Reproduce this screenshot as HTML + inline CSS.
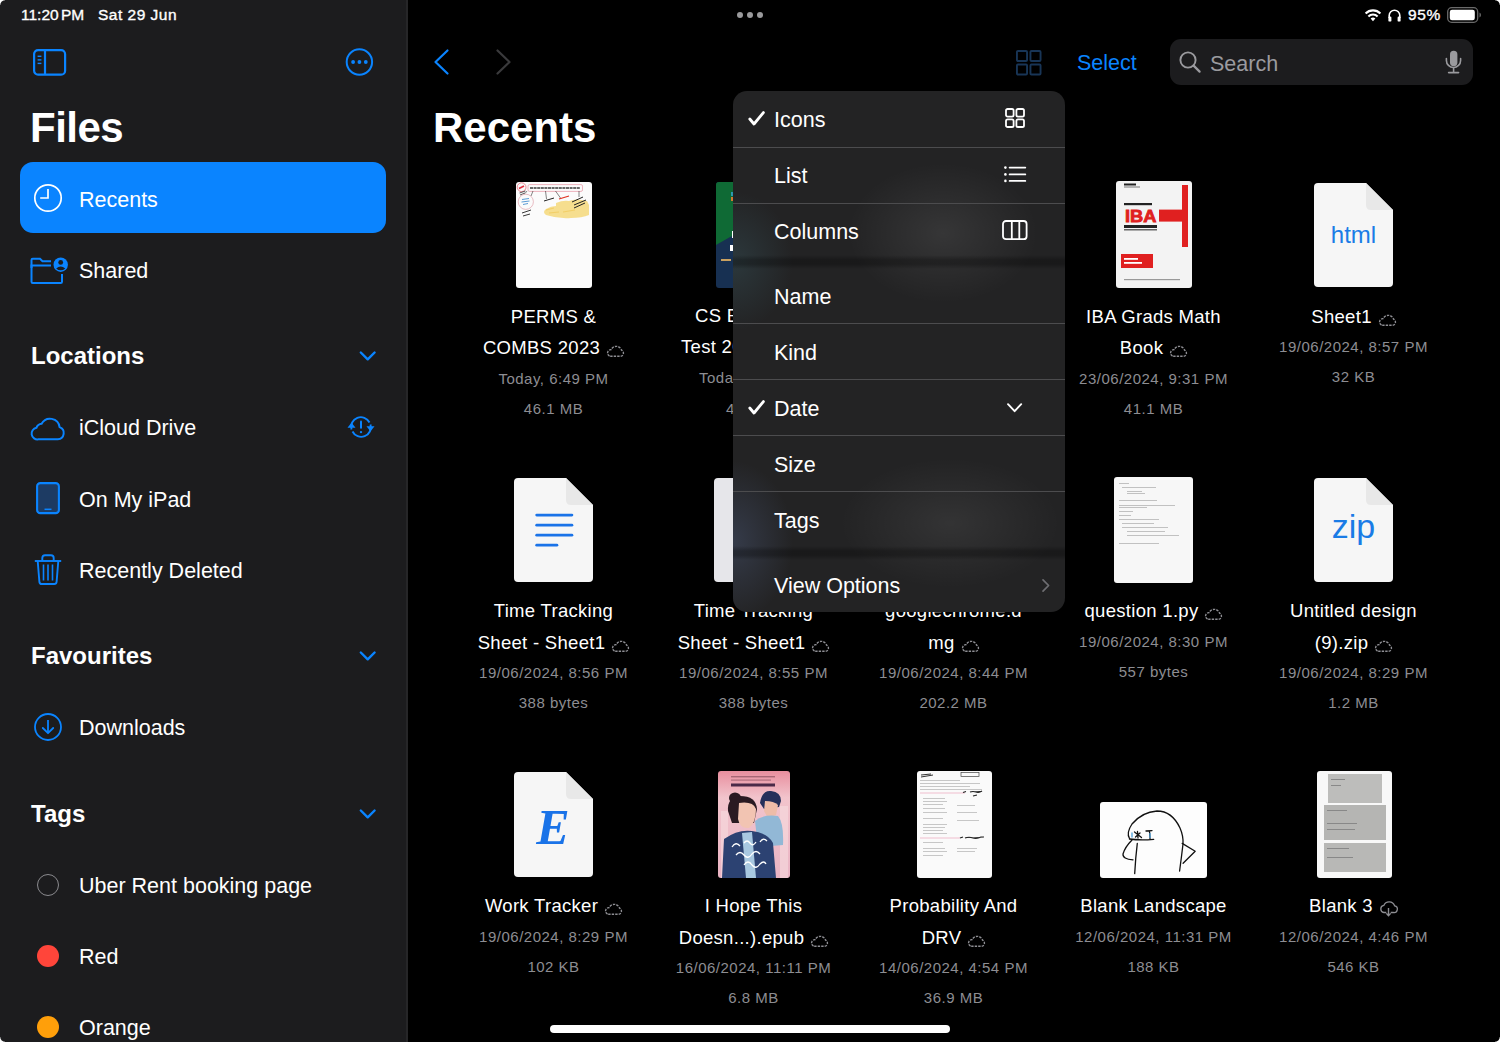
<!DOCTYPE html>
<html><head><meta charset="utf-8">
<style>
*{margin:0;padding:0;box-sizing:border-box}
html,body{width:1500px;height:1042px;overflow:hidden;background:#000;font-family:"Liberation Sans",sans-serif;color:#fff}
.a{position:absolute}
.t{position:absolute;white-space:nowrap;line-height:1}
.st{font-size:15.5px;color:#fff;-webkit-text-stroke:0.35px #fff}
.big{font-size:42px;font-weight:bold}
.sec{font-size:24px;font-weight:bold}
.item{font-size:21.5px}
.nm{position:absolute;width:240px;text-align:center;font-size:18.5px;line-height:31.5px;letter-spacing:0.3px;white-space:nowrap}
.mt{position:absolute;width:240px;text-align:center;font-size:15px;line-height:30px;letter-spacing:0.5px;color:#8d8d92;white-space:nowrap}
.cl{display:inline-block;width:18px;height:13px;margin-left:6px;vertical-align:-3px}
svg{position:absolute;overflow:visible}
.mi{position:absolute;left:774px;font-size:21.5px;line-height:1;white-space:nowrap}
</style></head><body>
<div class="a" style="left:0;top:0;width:406px;height:1042px;background:#1c1c1e"></div>
<div class="a" style="left:406px;top:0;width:2px;height:1042px;background:#262628"></div>

<div class="t st" style="left:21px;top:7px;word-spacing:-2px">11:20 PM</div>
<div class="t st" style="left:98px;top:7px;letter-spacing:0.5px">Sat 29 Jun</div>
<div class="t st" style="left:1408px;top:7px;letter-spacing:0.6px">95%</div>
<svg style="left:1364px;top:8px" width="18" height="14" viewBox="0 0 18 14">
<path d="M9 13.2 L6.6 10.6 A3.4 3.4 0 0 1 11.4 10.6 Z" fill="#fff"/>
<path d="M4.4 8.4 A6.5 6.5 0 0 1 13.6 8.4" stroke="#fff" stroke-width="2.1" fill="none"/>
<path d="M1.6 5.4 A10.5 10.5 0 0 1 16.4 5.4" stroke="#fff" stroke-width="2.1" fill="none"/>
</svg>
<svg style="left:1388px;top:9px" width="13" height="13" viewBox="0 0 13 13">
<path d="M1.2 9 V6.5 A5.3 5.3 0 0 1 11.8 6.5 V9" stroke="#fff" stroke-width="1.6" fill="none"/>
<rect x="0.4" y="7.6" width="3" height="5" rx="1.2" fill="#fff"/>
<rect x="9.6" y="7.6" width="3" height="5" rx="1.2" fill="#fff"/>
</svg>
<svg style="left:1447px;top:7px" width="36" height="16" viewBox="0 0 36 16">
<rect x="0.7" y="0.7" width="30" height="14.6" rx="4" fill="none" stroke="#6a6a6a" stroke-width="1.3"/>
<rect x="2.8" y="2.8" width="25" height="10.4" rx="2.2" fill="#fff"/>
<path d="M32.5 5.5 A2.8 2.8 0 0 1 32.5 10.5 Z" fill="#6a6a6a"/>
</svg>
<div class="a" style="left:737px;top:12px;width:6px;height:6px;border-radius:3px;background:#9a9a9c"></div>
<div class="a" style="left:747px;top:12px;width:6px;height:6px;border-radius:3px;background:#9a9a9c"></div>
<div class="a" style="left:757px;top:12px;width:6px;height:6px;border-radius:3px;background:#9a9a9c"></div>
<svg style="left:33px;top:49px" width="34" height="27" viewBox="0 0 34 27">
<rect x="1.1" y="1.1" width="31" height="24.6" rx="4" fill="none" stroke="#0a84ff" stroke-width="2.2"/>
<line x1="12" y1="1" x2="12" y2="26" stroke="#0a84ff" stroke-width="2.2"/>
<line x1="4.6" y1="7.3" x2="8.4" y2="7.3" stroke="#0a84ff" stroke-width="1.4"/>
<line x1="4.6" y1="10.9" x2="8.4" y2="10.9" stroke="#0a84ff" stroke-width="1.4"/>
<line x1="4.6" y1="14.4" x2="8.4" y2="14.4" stroke="#0a84ff" stroke-width="1.4"/>
</svg>
<svg style="left:345px;top:48px" width="28" height="28" viewBox="0 0 28 28">
<circle cx="14.4" cy="14" r="12.7" fill="none" stroke="#0a84ff" stroke-width="2"/>
<circle cx="8.1" cy="14" r="1.9" fill="#0a84ff"/><circle cx="14.4" cy="14" r="1.9" fill="#0a84ff"/><circle cx="20.8" cy="14" r="1.9" fill="#0a84ff"/>
</svg>
<div class="t big" style="left:30px;top:107px;letter-spacing:-0.5px">Files</div>
<div class="a" style="left:20px;top:162px;width:366px;height:71px;background:#0a84ff;border-radius:13px"></div>
<svg style="left:34px;top:184px" width="28" height="28" viewBox="0 0 28 28">
<circle cx="14" cy="14" r="13.2" fill="none" stroke="#fff" stroke-width="1.7"/>
<path d="M14 5 V14 H6.2" fill="none" stroke="#fff" stroke-width="1.7"/>
</svg>
<div class="t item" style="left:79px;top:190px">Recents</div>
<svg style="left:30px;top:256px" width="38" height="29" viewBox="0 0 38 29">
<path d="M1.5 12 V4 Q1.5 2.8 2.7 2.8 H10 L12.5 5.3 H21" fill="none" stroke="#0a84ff" stroke-width="2"/>
<path d="M21 9.5 H1.5 V25.8 Q1.5 27 2.7 27 H30.8 Q32 27 32 25.8 V18" fill="none" stroke="#0a84ff" stroke-width="2"/>
<circle cx="30.7" cy="8.7" r="7.2" fill="#0a84ff"/>
<circle cx="30.7" cy="6.4" r="2.4" fill="#1c1c1e"/>
<path d="M26.2 12.4 Q30.7 8.6 35.2 12.4 Q33.2 14.3 30.7 14.3 Q28.2 14.3 26.2 12.4Z" fill="#1c1c1e"/>
</svg>
<div class="t item" style="left:79px;top:261px">Shared</div>
<div class="t sec" style="left:31px;top:344px">Locations</div>
<svg style="left:359px;top:351px" width="18" height="10" viewBox="0 0 18 10">
<path d="M1.8 1.5 L8.7 8.3 L15.6 1.5" fill="none" stroke="#0a84ff" stroke-width="2.4" stroke-linecap="round" stroke-linejoin="round"/></svg>
<svg style="left:30px;top:414px" width="36" height="27" viewBox="0 0 36 27">
<path d="M8.5 25.3 H27.8 A6.3 6.3 0 0 0 29.6 13.1 A9.6 9.6 0 0 0 11.6 9.8 A6.2 6.2 0 0 0 6.4 13.8 A5.8 5.8 0 0 0 8.5 25.3 Z" fill="none" stroke="#0a84ff" stroke-width="2"/>
</svg>
<div class="t item" style="left:79px;top:418px">iCloud Drive</div>
<svg style="left:347px;top:414px" width="28" height="26" viewBox="0 0 28 26">
<path d="M4.5 15.5 A9.7 9.7 0 0 1 22.5 8.5" fill="none" stroke="#0a84ff" stroke-width="1.9"/>
<path d="M23.5 10.5 A9.7 9.7 0 0 1 5.5 17.5" fill="none" stroke="#0a84ff" stroke-width="1.9"/>
<path d="M0.5 13.8 L4.5 8.6 L8.5 13.8 Z" fill="#0a84ff"/>
<path d="M19.5 12.2 L23.5 17.4 L27.5 12.2 Z" fill="#0a84ff"/>
<rect x="13" y="6.5" width="2" height="8.2" rx="1" fill="#0a84ff"/>
<circle cx="14" cy="18.1" r="1.2" fill="#0a84ff"/>
</svg>
<svg style="left:36px;top:482px" width="24" height="33" viewBox="0 0 24 33">
<rect x="1.1" y="1.1" width="21.8" height="30" rx="3.2" fill="#1d3b63" stroke="#0a84ff" stroke-width="2.1"/>
<line x1="8.5" y1="27.3" x2="15.5" y2="27.3" stroke="#0a84ff" stroke-width="1.5"/>
</svg>
<div class="t item" style="left:79px;top:490px">On My iPad</div>
<svg style="left:34px;top:554px" width="28" height="32" viewBox="0 0 28 32">
<path d="M8.3 6.8 V4 Q8.3 1.2 11 1.2 H17 Q19.7 1.2 19.7 4 V6.8" fill="none" stroke="#0a84ff" stroke-width="1.9"/>
<line x1="0.8" y1="7" x2="27.2" y2="7" stroke="#0a84ff" stroke-width="1.9"/>
<path d="M3.7 7 L5.4 27.8 Q5.6 30 7.8 30 H20.2 Q22.4 30 22.6 27.8 L24.3 7" fill="none" stroke="#0a84ff" stroke-width="1.9"/>
<line x1="9.5" y1="10.5" x2="9.5" y2="26.5" stroke="#0a84ff" stroke-width="1.6"/>
<line x1="14" y1="10.5" x2="14" y2="26.5" stroke="#0a84ff" stroke-width="1.6"/>
<line x1="18.5" y1="10.5" x2="18.5" y2="26.5" stroke="#0a84ff" stroke-width="1.6"/>
</svg>
<div class="t item" style="left:79px;top:561px">Recently Deleted</div>
<div class="t sec" style="left:31px;top:644px">Favourites</div>
<svg style="left:359px;top:651px" width="18" height="10" viewBox="0 0 18 10">
<path d="M1.8 1.5 L8.7 8.3 L15.6 1.5" fill="none" stroke="#0a84ff" stroke-width="2.4" stroke-linecap="round" stroke-linejoin="round"/></svg>
<svg style="left:34px;top:713px" width="28" height="28" viewBox="0 0 28 28">
<circle cx="14" cy="14" r="13" fill="none" stroke="#0a84ff" stroke-width="1.8"/>
<path d="M14 7 V20" stroke="#0a84ff" stroke-width="1.8" fill="none"/>
<path d="M8.8 15 L14 20.2 L19.2 15" stroke="#0a84ff" stroke-width="1.8" fill="none" stroke-linejoin="round" stroke-linecap="round"/>
</svg>
<div class="t item" style="left:79px;top:718px">Downloads</div>
<div class="t sec" style="left:31px;top:802px">Tags</div>
<svg style="left:359px;top:809px" width="18" height="10" viewBox="0 0 18 10">
<path d="M1.8 1.5 L8.7 8.3 L15.6 1.5" fill="none" stroke="#0a84ff" stroke-width="2.4" stroke-linecap="round" stroke-linejoin="round"/></svg>
<div class="a" style="left:37px;top:874px;width:22px;height:22px;border-radius:11px;border:1.6px solid #8a8a8e"></div>
<div class="t item" style="left:79px;top:876px">Uber Rent booking page</div>
<div class="a" style="left:37px;top:945px;width:22px;height:22px;border-radius:11px;background:#ff453a"></div>
<div class="t item" style="left:79px;top:947px">Red</div>
<div class="a" style="left:37px;top:1016px;width:22px;height:22px;border-radius:11px;background:#ff9f0a"></div>
<div class="t item" style="left:79px;top:1018px">Orange</div>
<svg style="left:433px;top:49px" width="17" height="26" viewBox="0 0 17 26">
<path d="M14.5 1.5 L2.5 13 L14.5 24.5" fill="none" stroke="#0a84ff" stroke-width="2.2" stroke-linecap="round" stroke-linejoin="round"/></svg>
<svg style="left:495px;top:49px" width="17" height="26" viewBox="0 0 17 26">
<path d="M2.5 1.5 L14.5 13 L2.5 24.5" fill="none" stroke="#3a3a3c" stroke-width="2.2" stroke-linecap="round" stroke-linejoin="round"/></svg>
<svg style="left:1016px;top:50px" width="25.5" height="25.5" viewBox="0 0 25.5 25.5"><rect x="0.95" y="0.95" width="10.1" height="10.1" rx="1" fill="none" stroke="#183556" stroke-width="1.9"/><rect x="0.95" y="14.45" width="10.1" height="10.1" rx="1" fill="none" stroke="#183556" stroke-width="1.9"/><rect x="14.45" y="0.95" width="10.1" height="10.1" rx="1" fill="none" stroke="#183556" stroke-width="1.9"/><rect x="14.45" y="14.45" width="10.1" height="10.1" rx="1" fill="none" stroke="#183556" stroke-width="1.9"/></svg>
<div class="t item" style="left:1077px;top:53px;color:#0a84ff">Select</div>
<div class="a" style="left:1170px;top:39px;width:303px;height:46px;background:#1c1c1e;border-radius:11px"></div>
<svg style="left:1178px;top:50px" width="24" height="24" viewBox="0 0 24 24">
<circle cx="10" cy="10" r="7.6" fill="none" stroke="#9a9a9e" stroke-width="1.9"/>
<line x1="15.6" y1="15.6" x2="21.6" y2="21.6" stroke="#9a9a9e" stroke-width="2.2" stroke-linecap="round"/></svg>
<div class="t item" style="left:1210px;top:54px;color:#9a9a9e">Search</div>
<svg style="left:1444px;top:50px" width="19" height="25" viewBox="0 0 19 25">
<rect x="6" y="0.7" width="7.4" height="15.6" rx="3.7" fill="#9a9a9e"/>
<path d="M2.4 8.6 V10.4 A7.1 7.1 0 0 0 16.6 10.4 V8.6" fill="none" stroke="#9a9a9e" stroke-width="1.6" stroke-linecap="round"/>
<line x1="9.6" y1="17.6" x2="9.6" y2="22" stroke="#9a9a9e" stroke-width="1.6"/>
<line x1="4.6" y1="22.6" x2="14.6" y2="22.6" stroke="#9a9a9e" stroke-width="1.6" stroke-linecap="round"/></svg>
<div class="t big" style="left:433px;top:107px">Recents</div><svg style="left:516px;top:182px" width="76" height="106" viewBox="0 0 76 106">
<rect width="76" height="106" rx="3" fill="#fbfbfb"/>
<rect x="12" y="2.6" width="54.5" height="6.8" rx="1.5" fill="none" stroke="#e8a0ac" stroke-width="0.8"/>
<path d="M14 6 h50" stroke="#3a3a3a" stroke-width="1.3" stroke-dasharray="3 0.6"/>
<circle cx="5.6" cy="5.2" r="4.4" fill="none" stroke="#e05a6a" stroke-width="0.7"/>
<path d="M3 6.5 l5 -2.5" stroke="#e03040" stroke-width="1.6"/>
<path d="M3.5 11 l6 -2 M4 13 l5 -2" stroke="#333" stroke-width="0.8"/>
<circle cx="9.8" cy="19.8" r="7.6" fill="none" stroke="#e0a0aa" stroke-width="0.7"/>
<path d="M6 17.5 l7 -1 M5.5 20 l8 -1 M7 22.5 l5 -1" stroke="#4a90d0" stroke-width="0.9"/>
<path d="M11 9 L9 11.5 M17 9 L15 14 M29.5 9 l1 8 M39.5 9 l5 7 M63 9 v6" stroke="#333" stroke-width="0.6"/>
<path d="M40 21 Q47 18 53 19 Q60 16 71 19 L73 23 V33 Q66 36 55 36 Q42 37 30 33 Q26 30 30 27 Q35 24 40 24 Z" fill="#f4d46a" opacity="0.75"/>
<path d="M30 28 l8 -2 M33 31 l10 -1 M47 30 l12 -2" stroke="#f0c040" stroke-width="1" opacity="0.5"/>
<path d="M28 19 l10 -3" stroke="#222" stroke-width="1"/>
<path d="M43 17 l10 -3" stroke="#e03020" stroke-width="1.1"/>
<path d="M56 20 l11 -5 M58 23 l12 -5 M58 26 l11 -5" stroke="#222" stroke-width="1"/>
<path d="M6 31 l9 -3 M7 34 l7 -2" stroke="#222" stroke-width="0.9"/>
</svg>
<div class="nm" style="left:433.5px;top:300.6px"><div>PERMS &amp;</div><div>COMBS 2023<svg class="cl" style="position:relative" width="18" height="13" viewBox="0 0 18 13"><path d="M4.2 12.3 H14.4 A3.2 3.2 0 0 0 15.6 6.2 A5.6 5.6 0 0 0 5.2 5.6 A3.4 3.4 0 0 0 4.2 12.3 Z" fill="none" stroke="#8e8e93" stroke-width="1.4" stroke-dasharray="2.4 1.1"/></svg></div></div>
<div class="mt" style="left:433.5px;top:363.6px">Today, 6:49 PM<br>46.1 MB</div>
<svg style="left:716px;top:182px" width="76" height="106" viewBox="0 0 76 106">
<defs><clipPath id="cb"><rect width="76" height="106" rx="3"/></clipPath></defs>
<g clip-path="url(#cb)"><rect width="76" height="106" fill="#173052"/>
<path d="M0 0 H76 V20 L0 63 Z" fill="#0f6a35"/>
<rect x="15" y="10" width="3" height="4" fill="#2a9ab0"/><rect x="15" y="15" width="3" height="4" fill="#d07a30"/>
<rect x="16" y="49" width="2" height="7" fill="#fff"/><rect x="14" y="63" width="4" height="6" fill="#fff"/>
<rect x="5" y="77" width="10" height="2" fill="#c9a060"/>
</g></svg>
<div class="t" style="left:695px;top:309px;font-size:18.5px;letter-spacing:0.3px;line-height:1;top:306.5px">CS Exam Prep</div>
<div class="t" style="left:681px;top:338px;font-size:18.5px;letter-spacing:0.3px;line-height:1">Test 2023 Paper</div>
<div class="t" style="left:699px;top:370px;font-size:15px;letter-spacing:0.5px;line-height:1;color:#8d8d92">Today, 6:45 PM</div>
<div class="t" style="left:726px;top:400.5px;font-size:15px;letter-spacing:0.5px;line-height:1;color:#8d8d92">44.5 MB</div>
<svg style="left:1116px;top:181px" width="76" height="107" viewBox="0 0 76 107">
<rect width="76" height="107" rx="3" fill="#f3f3f3"/>
<rect x="8" y="2.5" width="12" height="2" fill="#222"/><rect x="8" y="5.5" width="16" height="1" fill="#777"/>
<rect x="8" y="22" width="28" height="2.2" fill="#222"/>
<text x="9" y="41.2" font-family="Liberation Sans" font-weight="bold" font-size="17" fill="#e02020" stroke="#e02020" stroke-width="0.8" textLength="31.5" lengthAdjust="spacingAndGlyphs">IBA</text>
<rect x="43" y="28.6" width="24" height="12" fill="#e02020"/>
<rect x="66" y="4" width="6" height="62" fill="#e02020"/>
<rect x="8" y="44" width="33" height="3" fill="#222"/><rect x="8" y="48" width="33" height="1.5" fill="#666"/>
<rect x="5" y="73" width="32" height="14" fill="#e02020"/>
<rect x="8" y="77" width="14" height="1.8" fill="#fff"/><rect x="8" y="81" width="18" height="1.8" fill="#fff"/>
<rect x="8" y="98" width="56" height="1.2" fill="#999"/>
</svg>
<div class="nm" style="left:1033.5px;top:300.6px"><div>IBA Grads Math</div><div>Book<svg class="cl" style="position:relative" width="18" height="13" viewBox="0 0 18 13"><path d="M4.2 12.3 H14.4 A3.2 3.2 0 0 0 15.6 6.2 A5.6 5.6 0 0 0 5.2 5.6 A3.4 3.4 0 0 0 4.2 12.3 Z" fill="none" stroke="#8e8e93" stroke-width="1.4" stroke-dasharray="2.4 1.1"/></svg></div></div>
<div class="mt" style="left:1033.5px;top:363.6px">23/06/2024, 9:31 PM<br>41.1 MB</div>
<svg style="left:1314px;top:183px" width="79" height="104" viewBox="0 0 79 104">
<path d="M4 0 H52 L79 27 V100 Q79 104 75 104 H4 Q0 104 0 100 V4 Q0 0 4 0Z" fill="#f6f6f6"/>
<path d="M52 0 V22 Q52 27 57 27 H79 Z" fill="#e8e8e8"/>
<text x="39.5" y="60" text-anchor="middle" font-family="Liberation Sans" font-size="24" fill="#1a7ce6">html</text></svg>
<div class="nm" style="left:1233.5px;top:300.6px"><div>Sheet1<svg class="cl" style="position:relative" width="18" height="13" viewBox="0 0 18 13"><path d="M4.2 12.3 H14.4 A3.2 3.2 0 0 0 15.6 6.2 A5.6 5.6 0 0 0 5.2 5.6 A3.4 3.4 0 0 0 4.2 12.3 Z" fill="none" stroke="#8e8e93" stroke-width="1.4" stroke-dasharray="2.4 1.1"/></svg></div></div>
<div class="mt" style="left:1233.5px;top:332.1px">19/06/2024, 8:57 PM<br>32 KB</div>
<svg style="left:514px;top:478px" width="79" height="104" viewBox="0 0 79 104">
<path d="M4 0 H52 L79 27 V100 Q79 104 75 104 H4 Q0 104 0 100 V4 Q0 0 4 0Z" fill="#f6f6f6"/>
<path d="M52 0 V22 Q52 27 57 27 H79 Z" fill="#e8e8e8"/>
<g fill="#1a73e8"><rect x="21.3" y="35.7" width="38" height="2.8" rx="1.4"/><rect x="21.3" y="45.8" width="38" height="2.8" rx="1.4"/><rect x="21.3" y="55.8" width="38" height="2.8" rx="1.4"/><rect x="21.3" y="65.8" width="23" height="2.8" rx="1.4"/></g></svg>
<div class="nm" style="left:433.5px;top:595.3px"><div>Time Tracking</div><div>Sheet - Sheet1<svg class="cl" style="position:relative" width="18" height="13" viewBox="0 0 18 13"><path d="M4.2 12.3 H14.4 A3.2 3.2 0 0 0 15.6 6.2 A5.6 5.6 0 0 0 5.2 5.6 A3.4 3.4 0 0 0 4.2 12.3 Z" fill="none" stroke="#8e8e93" stroke-width="1.4" stroke-dasharray="2.4 1.1"/></svg></div></div>
<div class="mt" style="left:433.5px;top:658.3px">19/06/2024, 8:56 PM<br>388 bytes</div>
<svg style="left:714px;top:478px" width="79" height="104" viewBox="0 0 79 104">
<path d="M4 0 H52 L79 27 V100 Q79 104 75 104 H4 Q0 104 0 100 V4 Q0 0 4 0Z" fill="#e6e6ea"/>
<path d="M52 0 V22 Q52 27 57 27 H79 Z" fill="#e8e8e8"/>
<g fill="#1a73e8"><rect x="21.3" y="35.7" width="38" height="2.8" rx="1.4"/><rect x="21.3" y="45.8" width="38" height="2.8" rx="1.4"/><rect x="21.3" y="55.8" width="38" height="2.8" rx="1.4"/><rect x="21.3" y="65.8" width="23" height="2.8" rx="1.4"/></g></svg>
<div class="nm" style="left:633.5px;top:595.3px"><div>Time Tracking</div><div>Sheet - Sheet1<svg class="cl" style="position:relative" width="18" height="13" viewBox="0 0 18 13"><path d="M4.2 12.3 H14.4 A3.2 3.2 0 0 0 15.6 6.2 A5.6 5.6 0 0 0 5.2 5.6 A3.4 3.4 0 0 0 4.2 12.3 Z" fill="none" stroke="#8e8e93" stroke-width="1.4" stroke-dasharray="2.4 1.1"/></svg></div></div>
<div class="mt" style="left:633.5px;top:658.3px">19/06/2024, 8:55 PM<br>388 bytes</div>
<div class="nm" style="left:833.5px;top:595.3px"><div>googlechrome.d</div><div>mg<svg class="cl" style="position:relative" width="18" height="13" viewBox="0 0 18 13"><path d="M4.2 12.3 H14.4 A3.2 3.2 0 0 0 15.6 6.2 A5.6 5.6 0 0 0 5.2 5.6 A3.4 3.4 0 0 0 4.2 12.3 Z" fill="none" stroke="#8e8e93" stroke-width="1.4" stroke-dasharray="2.4 1.1"/></svg></div></div>
<div class="mt" style="left:833.5px;top:658.3px">19/06/2024, 8:44 PM<br>202.2 MB</div>
<svg style="left:1114px;top:477px" width="79" height="106" viewBox="0 0 79 106">
<rect width="79" height="106" rx="3" fill="#f7f7f7"/><rect x="5" y="6" width="10" height="0.7" fill="#aaa"/><rect x="8" y="10" width="34" height="0.7" fill="#aaa"/><rect x="13" y="14" width="15" height="0.7" fill="#aaa"/><rect x="13" y="16" width="18" height="0.7" fill="#aaa"/><rect x="5" y="23" width="38" height="0.7" fill="#aaa"/><rect x="5" y="28" width="56" height="0.7" fill="#aaa"/><rect x="5" y="30" width="28" height="0.7" fill="#aaa"/><rect x="5" y="34" width="14" height="0.7" fill="#aaa"/><rect x="5" y="38" width="12" height="0.7" fill="#aaa"/><rect x="5" y="42" width="40" height="0.7" fill="#aaa"/><rect x="8" y="46" width="32" height="0.7" fill="#aaa"/><rect x="8" y="50" width="46" height="0.7" fill="#aaa"/><rect x="13" y="54" width="38" height="0.7" fill="#aaa"/><rect x="13" y="58" width="52" height="0.7" fill="#aaa"/><rect x="5" y="66" width="40" height="0.7" fill="#aaa"/></svg>
<div class="nm" style="left:1033.5px;top:595.3px"><div>question 1.py<svg class="cl" style="position:relative" width="18" height="13" viewBox="0 0 18 13"><path d="M4.2 12.3 H14.4 A3.2 3.2 0 0 0 15.6 6.2 A5.6 5.6 0 0 0 5.2 5.6 A3.4 3.4 0 0 0 4.2 12.3 Z" fill="none" stroke="#8e8e93" stroke-width="1.4" stroke-dasharray="2.4 1.1"/></svg></div></div>
<div class="mt" style="left:1033.5px;top:626.8px">19/06/2024, 8:30 PM<br>557 bytes</div>
<svg style="left:1314px;top:478px" width="79" height="104" viewBox="0 0 79 104">
<path d="M4 0 H52 L79 27 V100 Q79 104 75 104 H4 Q0 104 0 100 V4 Q0 0 4 0Z" fill="#f6f6f6"/>
<path d="M52 0 V22 Q52 27 57 27 H79 Z" fill="#e8e8e8"/>
<text x="39.5" y="60" text-anchor="middle" font-family="Liberation Sans" font-size="34" fill="#1a7ce6">zip</text></svg>
<div class="nm" style="left:1233.5px;top:595.3px"><div>Untitled design</div><div>(9).zip<svg class="cl" style="position:relative" width="18" height="13" viewBox="0 0 18 13"><path d="M4.2 12.3 H14.4 A3.2 3.2 0 0 0 15.6 6.2 A5.6 5.6 0 0 0 5.2 5.6 A3.4 3.4 0 0 0 4.2 12.3 Z" fill="none" stroke="#8e8e93" stroke-width="1.4" stroke-dasharray="2.4 1.1"/></svg></div></div>
<div class="mt" style="left:1233.5px;top:658.3px">19/06/2024, 8:29 PM<br>1.2 MB</div>
<svg style="left:514px;top:772px" width="79" height="105" viewBox="0 0 79 105">
<path d="M4 0 H52 L79 27 V101 Q79 105 75 105 H4 Q0 105 0 101 V4 Q0 0 4 0Z" fill="#f6f6f6"/>
<path d="M52 0 V22 Q52 27 57 27 H79 Z" fill="#e8e8e8"/>
<text x="39" y="72" text-anchor="middle" font-family="Liberation Serif" font-weight="bold" font-style="italic" font-size="50" fill="#1a73e8">E</text></svg>
<div class="nm" style="left:433.5px;top:890.0px"><div>Work Tracker<svg class="cl" style="position:relative" width="18" height="13" viewBox="0 0 18 13"><path d="M4.2 12.3 H14.4 A3.2 3.2 0 0 0 15.6 6.2 A5.6 5.6 0 0 0 5.2 5.6 A3.4 3.4 0 0 0 4.2 12.3 Z" fill="none" stroke="#8e8e93" stroke-width="1.4" stroke-dasharray="2.4 1.1"/></svg></div></div>
<div class="mt" style="left:433.5px;top:921.5px">19/06/2024, 8:29 PM<br>102 KB</div>
<svg style="left:718px;top:771px" width="72" height="107" viewBox="0 0 72 107">
<defs><clipPath id="ep"><rect width="72" height="107" rx="3"/></clipPath>
<linearGradient id="eg" x1="0" y1="0" x2="0" y2="1"><stop offset="0" stop-color="#e88e9e"/><stop offset="0.25" stop-color="#f2c4cc"/><stop offset="1" stop-color="#eab4c4"/></linearGradient></defs>
<g clip-path="url(#ep)"><rect width="72" height="107" fill="url(#eg)"/>
<rect x="13" y="5" width="44" height="1.4" fill="#8a5060" opacity="0.7"/><rect x="13" y="8.5" width="40" height="1.2" fill="#8a5060" opacity="0.6"/>
<rect x="13" y="12.5" width="44" height="3" fill="#4a2a48"/>
<rect x="3" y="40" width="7" height="67" fill="#f6dce0" opacity="0.6"/><rect x="62" y="35" width="8" height="72" fill="#f6dce0" opacity="0.6"/>
<path d="M42 32 Q44 19 53 20 Q63 21 63 30 L61 36 L46 38 Z" fill="#25305a"/>
<path d="M47 30 Q56 30 60 34 L58 44 L50 47 L46 40 Z" fill="#eebca8"/>
<path d="M37 50 Q45 43 60 45 Q66 52 65 74 L40 76 Z" fill="#92b8d6"/>
<ellipse cx="17" cy="27" rx="6" ry="5.5" fill="#2a1a22"/>
<path d="M10 40 Q9 26 22 25 Q38 25 39 38 L36 52 L14 52 Z" fill="#2a1a22"/>
<path d="M21 32 Q35 30 38 38 Q38 52 31 57 Q22 58 20 48 Z" fill="#f2c4b2"/>
<path d="M6 68 Q20 58 34 60 Q50 62 55 72 L58 107 H4 Z" fill="#2c4272"/>
<path d="M24 62 L34 61 L38 107 H28 Z" fill="#a8c8e0"/>
<path d="M14 76 q4 -6 8 -1 M26 72 q3 -4 6 0 q3 4 6 -1 M42 71 q3 -5 7 -1 M18 84 q4 -5 8 0 q4 5 8 -1 q4 -5 8 0 M26 94 q4 -6 8 0 q4 5 8 -1 q4 -4 6 0" fill="none" stroke="#fff" stroke-width="1.3"/>
</g></svg>
<div class="nm" style="left:633.5px;top:890.0px"><div>I Hope This</div><div>Doesn...).epub<svg class="cl" style="position:relative" width="18" height="13" viewBox="0 0 18 13"><path d="M4.2 12.3 H14.4 A3.2 3.2 0 0 0 15.6 6.2 A5.6 5.6 0 0 0 5.2 5.6 A3.4 3.4 0 0 0 4.2 12.3 Z" fill="none" stroke="#8e8e93" stroke-width="1.4" stroke-dasharray="2.4 1.1"/></svg></div></div>
<div class="mt" style="left:633.5px;top:953.0px">16/06/2024, 11:11 PM<br>6.8 MB</div>
<svg style="left:917px;top:771px" width="75" height="107" viewBox="0 0 75 107">
<rect width="75" height="107" rx="3" fill="#fafafa"/>
<path d="M4 6 l12 -2 M4 4 l10 -1" stroke="#333" stroke-width="1"/>
<rect x="44" y="1.5" width="18" height="4" fill="none" stroke="#444" stroke-width="0.7"/>
<rect x="3" y="21" width="45" height="2" fill="#f5dce4"/>
<rect x="3" y="66" width="40" height="2" fill="#f5dce4"/>
<path d="M46 21.5 l3 -1 M53 21 q3 -1 6 0 q3 1 6 -1 M56 25 l4 -1 M43 67 l3 -1 M48 67 q4 -1.5 8 0 q4 1 8 -1 l3 0" stroke="#222" stroke-width="1.2"/>
<rect x="3" y="9" width="40" height="0.8" fill="#bbb"/><rect x="3" y="12" width="60" height="0.8" fill="#bbb"/><rect x="3" y="15" width="50" height="0.8" fill="#bbb"/><rect x="3" y="18" width="62" height="0.8" fill="#bbb"/><rect x="6" y="27" width="22" height="0.8" fill="#bbb"/><rect x="6" y="30" width="24" height="0.8" fill="#bbb"/><rect x="6" y="33" width="20" height="0.8" fill="#bbb"/><rect x="6" y="37" width="22" height="0.8" fill="#bbb"/><rect x="6" y="41" width="24" height="0.8" fill="#bbb"/><rect x="6" y="47" width="20" height="0.8" fill="#bbb"/><rect x="6" y="53" width="24" height="0.8" fill="#bbb"/><rect x="6" y="56" width="22" height="0.8" fill="#bbb"/><rect x="6" y="59" width="20" height="0.8" fill="#bbb"/><rect x="6" y="62" width="24" height="0.8" fill="#bbb"/><rect x="6" y="71" width="20" height="0.8" fill="#bbb"/><rect x="6" y="77" width="22" height="0.8" fill="#bbb"/><rect x="6" y="80" width="24" height="0.8" fill="#bbb"/><rect x="6" y="84" width="20" height="0.8" fill="#bbb"/><rect x="40" y="34" width="18" height="0.8" fill="#bbb"/><rect x="40" y="41" width="20" height="0.8" fill="#bbb"/><rect x="40" y="49" width="22" height="0.8" fill="#bbb"/><rect x="40" y="77" width="20" height="0.8" fill="#bbb"/><rect x="40" y="80" width="18" height="0.8" fill="#bbb"/></svg>
<div class="nm" style="left:833.5px;top:890.0px"><div>Probability And</div><div>DRV<svg class="cl" style="position:relative" width="18" height="13" viewBox="0 0 18 13"><path d="M4.2 12.3 H14.4 A3.2 3.2 0 0 0 15.6 6.2 A5.6 5.6 0 0 0 5.2 5.6 A3.4 3.4 0 0 0 4.2 12.3 Z" fill="none" stroke="#8e8e93" stroke-width="1.4" stroke-dasharray="2.4 1.1"/></svg></div></div>
<div class="mt" style="left:833.5px;top:953.0px">14/06/2024, 4:54 PM<br>36.9 MB</div>
<svg style="left:1100px;top:802px" width="107" height="76" viewBox="0 0 107 76">
<rect width="107" height="76" rx="3" fill="#fdfdfd"/>
<g fill="none" stroke="#111" stroke-width="1.3" stroke-linecap="round" stroke-linejoin="round">
<path d="M29.5 36.5 Q26 31 32 22 Q42 10 57 9 Q72 9 80 26 Q83.5 34 83 42 Q81.5 55 79.6 69"/>
<path d="M29.5 37 Q40 38.5 53.7 37.3"/>
<path d="M32 38 Q25 45 23 52 Q22.5 57 33 57.8"/>
<path d="M37.3 41.4 Q35.5 56 34.7 71.6"/>
<path d="M82.2 41.4 L95.2 49.2 L83.1 61.3"/>
<path d="M34.5 30 L41.5 35.5 M35.5 35 L40 31 M37.5 29.5 L38 36"/>
<path d="M46 29 L52 28.6 M49.5 29 L50 36.5"/>
</g>
<path d="M32 30.5 V35.5 M50 31 V36" stroke="#4aa0dc" stroke-width="1.3"/>
</svg>
<div class="nm" style="left:1033.5px;top:890.0px"><div>Blank Landscape</div></div>
<div class="mt" style="left:1033.5px;top:921.5px">12/06/2024, 11:31 PM<br>188 KB</div>
<svg style="left:1317px;top:771px" width="75" height="107" viewBox="0 0 75 107">
<rect width="75" height="107" rx="3" fill="#f8f8f8"/>
<rect x="11" y="3" width="54" height="29" fill="#bdbdbb"/>
<rect x="7" y="34" width="62" height="35" fill="#b5b5b3"/>
<rect x="7" y="72" width="62" height="29" fill="#b8b8b6"/>
<g fill="#888"><rect x="14" y="8" width="14" height="1"/><rect x="14" y="14" width="10" height="1"/><rect x="10" y="39" width="20" height="1"/><rect x="10" y="52" width="30" height="1"/><rect x="10" y="58" width="28" height="1"/><rect x="10" y="77" width="22" height="1"/><rect x="10" y="86" width="26" height="1"/></g>
</svg>
<div class="nm" style="left:1233.5px;top:890.0px"><div>Blank 3<svg class="cl" style="position:relative;width:19px;height:16px;vertical-align:-5px" width="19" height="16" viewBox="0 0 19 16"><path d="M7.3 11.5 H4.8 A3.6 3.6 0 0 1 4.8 4.4 A5.8 5.8 0 0 1 15.6 4.8 A3.4 3.4 0 0 1 14.2 11.5 H11.7" fill="none" stroke="#8e8e93" stroke-width="1.3"/><path d="M9.5 7 V14.6 M7.3 12.4 L9.5 14.8 L11.7 12.4" fill="none" stroke="#8e8e93" stroke-width="1.4"/></svg></div></div>
<div class="mt" style="left:1233.5px;top:921.5px">12/06/2024, 4:46 PM<br>546 KB</div><div class="a" style="left:733px;top:91px;width:332px;height:521px;border-radius:14px;overflow:hidden;background:#232324;">
<div class="a" style="left:0;top:0;width:332px;height:520px;background:radial-gradient(ellipse 95px 70px at 210px 142px, rgba(255,255,255,0.085), rgba(255,255,255,0) 100%),radial-gradient(ellipse 110px 65px at 217px 432px, rgba(255,255,255,0.075), rgba(255,255,255,0) 100%),radial-gradient(ellipse 60px 70px at 0px 170px, rgba(60,95,105,0.35), rgba(0,0,0,0) 100%),radial-gradient(ellipse 60px 80px at 0px 450px, rgba(80,95,130,0.4), rgba(0,0,0,0) 100%)"></div>

<div class="a" style="left:0;top:56px;width:332px;height:1px;background:#4c4c4e"></div>
<div class="a" style="left:0;top:112px;width:332px;height:1px;background:#4c4c4e"></div>
<div class="a" style="left:0;top:232px;width:332px;height:1px;background:#4c4c4e"></div>
<div class="a" style="left:0;top:288px;width:332px;height:1px;background:#4c4c4e"></div>
<div class="a" style="left:0;top:344px;width:332px;height:1px;background:#4c4c4e"></div>
<div class="a" style="left:0;top:400px;width:332px;height:1px;background:#4c4c4e"></div>
<div class="a" style="left:0;top:164px;width:332px;height:14px;background:linear-gradient(180deg,rgba(0,0,0,0),rgba(0,0,0,0.28) 35%,rgba(0,0,0,0.28) 65%,rgba(0,0,0,0))"></div>
<div class="a" style="left:0;top:455px;width:332px;height:14px;background:linear-gradient(180deg,rgba(0,0,0,0),rgba(0,0,0,0.28) 35%,rgba(0,0,0,0.28) 65%,rgba(0,0,0,0))"></div>
</div>
<div class="mi" style="top:109.5px">Icons</div>
<svg style="left:748px;top:111px" width="17" height="15" viewBox="0 0 17 15">
<path d="M1.8 8 L6 13 L15.4 1.6" fill="none" stroke="#fff" stroke-width="2.8" stroke-linecap="round" stroke-linejoin="round"/></svg>
<div class="mi" style="top:165.5px">List</div>
<div class="mi" style="top:221.5px">Columns</div>
<div class="mi" style="top:286.5px">Name</div>
<div class="mi" style="top:342.5px">Kind</div>
<div class="mi" style="top:398.5px">Date</div>
<svg style="left:748px;top:400px" width="17" height="15" viewBox="0 0 17 15">
<path d="M1.8 8 L6 13 L15.4 1.6" fill="none" stroke="#fff" stroke-width="2.8" stroke-linecap="round" stroke-linejoin="round"/></svg>
<div class="mi" style="top:454.5px">Size</div>
<div class="mi" style="top:510.5px">Tags</div>
<div class="mi" style="top:575.5px">View Options</div>
<svg style="left:1005px;top:108px" width="21" height="21" viewBox="0 0 21 21">
<rect x="1" y="1" width="7.6" height="7.6" rx="1.6" fill="none" stroke="#fff" stroke-width="1.8"/>
<rect x="11.4" y="1" width="7.6" height="7.6" rx="1.6" fill="none" stroke="#fff" stroke-width="1.8"/>
<rect x="1" y="11.4" width="7.6" height="7.6" rx="1.6" fill="none" stroke="#fff" stroke-width="1.8"/>
<rect x="11.4" y="11.4" width="7.6" height="7.6" rx="1.6" fill="none" stroke="#fff" stroke-width="1.8"/></svg>
<svg style="left:1003px;top:164px" width="24" height="20" viewBox="0 0 24 20">
<circle cx="2.4" cy="3.6" r="1.3" fill="#fff"/><circle cx="2.4" cy="10.4" r="1.3" fill="#fff"/><circle cx="2.4" cy="16.9" r="1.3" fill="#fff"/>
<line x1="6.6" y1="3.6" x2="22.3" y2="3.6" stroke="#fff" stroke-width="1.8" stroke-linecap="round"/>
<line x1="6.6" y1="10.4" x2="22.3" y2="10.4" stroke="#fff" stroke-width="1.8" stroke-linecap="round"/>
<line x1="6.6" y1="16.9" x2="22.3" y2="16.9" stroke="#fff" stroke-width="1.8" stroke-linecap="round"/></svg>
<svg style="left:1002px;top:220px" width="26" height="21" viewBox="0 0 26 21">
<rect x="1" y="1" width="23.6" height="18.2" rx="3" fill="none" stroke="#fff" stroke-width="1.8"/>
<line x1="9.8" y1="1" x2="9.8" y2="19.2" stroke="#fff" stroke-width="1.8"/>
<line x1="17.3" y1="1" x2="17.3" y2="19.2" stroke="#fff" stroke-width="1.8"/></svg>
<svg style="left:1006px;top:402px" width="18" height="12" viewBox="0 0 18 12">
<path d="M2 2.2 L8.6 9.2 L15.2 2.2" fill="none" stroke="#fff" stroke-width="1.9" stroke-linecap="round" stroke-linejoin="round"/></svg>
<svg style="left:1041px;top:578px" width="10" height="15" viewBox="0 0 10 15">
<path d="M2 1.8 L7.6 7.5 L2 13.2" fill="none" stroke="#6e6e72" stroke-width="1.7" stroke-linecap="round" stroke-linejoin="round"/></svg>
<div class="a" style="left:550px;top:1025px;width:400px;height:8px;background:#fff;border-radius:4px"></div>
<div class="a" style="left:0;top:0;width:5px;height:5px;background:radial-gradient(circle at 5px 5px, rgba(255,255,255,0) 4.2px, #fff 5.2px)"></div>
<div class="a" style="right:0;top:0;width:5px;height:5px;background:radial-gradient(circle at 0 5px, rgba(255,255,255,0) 4.2px, #fff 5.2px)"></div>
<div class="a" style="left:0;bottom:0;width:5px;height:5px;background:radial-gradient(circle at 5px 0, rgba(255,255,255,0) 4.2px, #fff 5.2px)"></div>
<div class="a" style="right:0;bottom:0;width:5px;height:5px;background:radial-gradient(circle at 0 0, rgba(255,255,255,0) 4.2px, #fff 5.2px)"></div>
</body></html>
